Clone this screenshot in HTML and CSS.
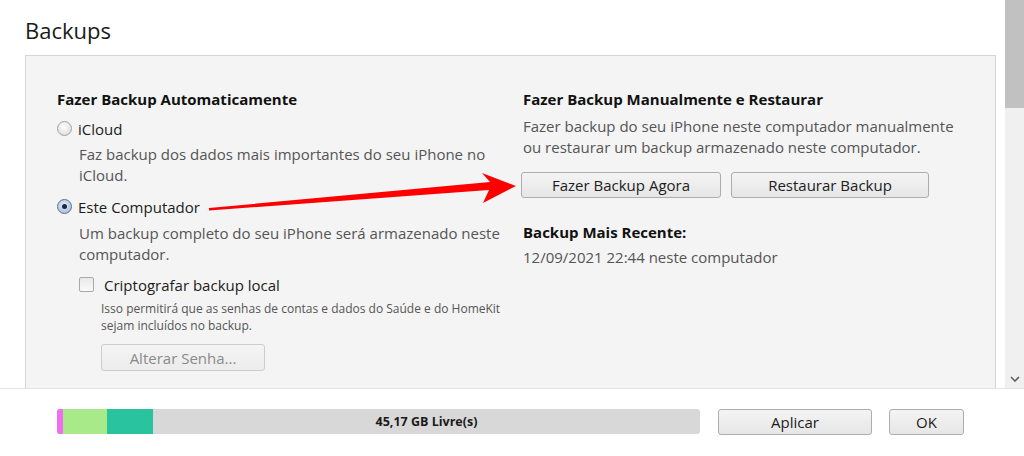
FILE: index.html
```html
<!DOCTYPE html>
<html lang="pt">

<head>
    <meta charset="UTF-8">
    <title>Backups</title>
    <link rel="stylesheet" href="styles.css">
</head>

<body>
    <div class="window">
        <div class="top-area">
            <div class="scroll-content">
                <h1 class="title">Backups</h1>
                <div class="panel">
                    <div class="column">
                        <h2>Fazer Backup Automaticamente</h2>
                        <div class="option first">
                            <span class="radio"></span>
                            <span class="option-label">iCloud</span>
                        </div>
                        <p class="desc">Faz backup dos dados mais importantes do seu iPhone no<br>iCloud.</p>
                        <div class="option">
                            <span class="radio checked"></span>
                            <span class="option-label">Este Computador</span>
                        </div>
                        <p class="desc second">Um backup completo do seu iPhone será armazenado neste<br>computador.</p>
                        <div class="sub">
                            <div class="option">
                                <span class="checkbox"></span>
                                <span class="option-label check-label">Criptografar backup local</span>
                            </div>
                            <div class="sub-body">
                                <p class="small">Isso permitirá que as senhas de contas e dados do Saúde e do HomeKit<br>sejam incluídos no backup.</p>
                                <button class="btn disabled btn-senha">Alterar Senha...</button>
                            </div>
                        </div>
                    </div>
                    <div class="column right">
                        <h2>Fazer Backup Manualmente e Restaurar</h2>
                        <p class="desc flush">Fazer backup do seu iPhone neste computador manualmente<br>ou restaurar um backup armazenado neste computador.</p>
                        <div class="btn-row">
                            <button class="btn btn-agora">Fazer Backup Agora</button>
                            <button class="btn btn-restaurar">Restaurar Backup</button>
                        </div>
                        <h2 class="recent">Backup Mais Recente:</h2>
                        <p class="desc flush last">12/09/2021 22:44 neste computador</p>
                    </div>
                </div>
            </div>
            <div class="scrollbar">
                <div class="thumb"></div>
                <div class="track">
                    <svg class="chev" width="10" height="6" viewBox="0 0 10 6">
                        <path d="M1 1 L5 5 L9 1" fill="none" stroke="#606060" stroke-width="1.6" />
                    </svg>
                </div>
            </div>

            <svg class="arrow" width="330" height="60" viewBox="0 0 330 60">
                <path d="M9 48 L290 22 L282 13 L316 26 L283 43 L289 30 L9 50.5 Z" fill="#ff0000" />
            </svg>
        </div>

        <div class="footer">
            <div class="storage">
                <div class="seg seg-pink"></div>
                <div class="seg seg-green"></div>
                <div class="seg seg-teal"></div>
                <div class="seg-free">45,17 GB Livre(s)</div>
            </div>
            <button class="btn btn-aplicar">Aplicar</button>
            <button class="btn btn-ok">OK</button>
        </div>
    </div>
</body>

</html>
```

FILE: styles.css
```css
body {
    margin: 0;
    background: #ffffff;
    font-family: "Open Sans", "Noto Sans", sans-serif;
    color: #1a1a1a;
}

.window {
    width: 1024px;
    height: 456px;
    display: flex;
    flex-direction: column;
    overflow: hidden;
}

.top-area {
    position: relative;
    height: 388px;
    display: flex;
    border-bottom: 1px solid #e3e3e3;
    overflow: hidden;
}

.scroll-content {
    flex: 1;
    padding-left: 25px;
}

.title {
    margin: 0;
    padding-top: 15px;
    height: 55px;
    box-sizing: border-box;
    font-size: 22px;
    font-weight: 400;
    line-height: 30px;
    color: #1a1a1a;
}

.panel {
    width: 971px;
    height: 360px;
    box-sizing: border-box;
    border: 1px solid #d5d5d5;
    background: #f4f4f4;
    padding: 33px 0 0 31px;
    display: flex;
}

.column {
    width: 466px;
}

.column h2 {
    margin: 0;
    font-size: 15px;
    font-weight: 700;
    line-height: 20px;
    color: #111;
}

.option {
    display: flex;
    align-items: center;
    height: 21px;
    margin-top: 3px;
}

.option.first {
    margin-top: 9px;
}

.option-label {
    font-size: 15px;
    margin-left: 6px;
    color: #1c1c1c;
}

.radio {
    width: 13px;
    height: 13px;
    border-radius: 50%;
    border: 1px solid #a2a2a2;
    background: radial-gradient(circle at 45% 40%, #fdfdfd 0%, #e6e6e6 60%, #d4d4d4 100%);
    position: relative;
}

.radio.checked {
    border-color: #5a7193;
    background: radial-gradient(circle at 45% 40%, #e7eef8 0%, #b5c6de 65%, #9db1cf 100%);
}

.radio.checked::after {
    content: "";
    position: absolute;
    left: 4px;
    top: 4px;
    width: 5px;
    height: 5px;
    border-radius: 50%;
    background: #16284a;
}

.desc {
    margin: 5px 0 10px 22px;
    font-size: 15px;
    line-height: 21px;
    color: #555;
}

.desc.second {
    margin-top: 6px;
    margin-bottom: 9px;
}

.desc.flush {
    margin-left: 0;
}

.sub {
    margin-left: 22px;
}

.sub-body {
    margin-left: 22px;
}

.checkbox {
    width: 13px;
    height: 13px;
    border: 1px solid #a9a9a9;
    border-radius: 2px;
    background: linear-gradient(#e9e9e9, #f9f9f9);
}

.check-label {
    margin-left: 10px;
}

.small {
    margin: 5px 0 0 0;
    font-size: 12px;
    line-height: 17px;
    color: #555;
}

.btn {
    font-family: "Open Sans", "Noto Sans", sans-serif;
    font-size: 15px;
    color: #1c1c1c;
    height: 26px;
    padding: 0;
    border: 1px solid #adadad;
    border-radius: 3px;
    background: linear-gradient(#f4f4f4, #e6e6e6);
}

.btn.disabled {
    color: #8a8a8a;
    border-color: #cdcdcd;
    background: linear-gradient(#f4f4f4, #ececec);
}

.btn-senha {
    margin-top: 10px;
    width: 164px;
    height: 27px;
}

.right .desc {
    margin-top: 7px;
    margin-bottom: 0;
}

.btn-row {
    display: flex;
    gap: 10px;
    margin-left: -2px;
    margin-top: 14px;
}

.btn-agora {
    width: 200px;
}

.btn-restaurar {
    width: 198px;
}

.column h2.recent {
    margin-top: 24px;
}

.right .desc.last {
    margin-top: 5px;
}

.scrollbar {
    width: 19px;
    margin-left: 9px;
    display: flex;
    flex-direction: column;
}

.thumb {
    height: 108px;
    background: #c1c1c1;
}

.track {
    flex: 1;
    background: #f0f0f0;
    display: flex;
    align-items: flex-end;
    justify-content: center;
    padding-bottom: 6px;
}

.arrow {
    position: absolute;
    left: 200px;
    top: 160px;
}

.footer {
    flex: 1;
    display: flex;
    align-items: center;
    padding-left: 57px;
    padding-bottom: 2px;
}

.storage {
    width: 643px;
    height: 25px;
    display: flex;
    border-radius: 3px;
    overflow: hidden;
    background: #d8d8d8;
}

.seg-pink {
    width: 6px;
    background: #f06cf0;
}

.seg-green {
    width: 44px;
    background: #a8e98a;
}

.seg-teal {
    width: 46px;
    background: #29c39f;
}

.seg-free {
    flex: 1;
    text-align: center;
    font-size: 12.5px;
    font-weight: 700;
    line-height: 25px;
    color: #1a1a1a;
}

.btn-aplicar {
    margin-left: 18px;
    width: 154px;
}

.btn-ok {
    margin-left: 17px;
    width: 75px;
}
```
